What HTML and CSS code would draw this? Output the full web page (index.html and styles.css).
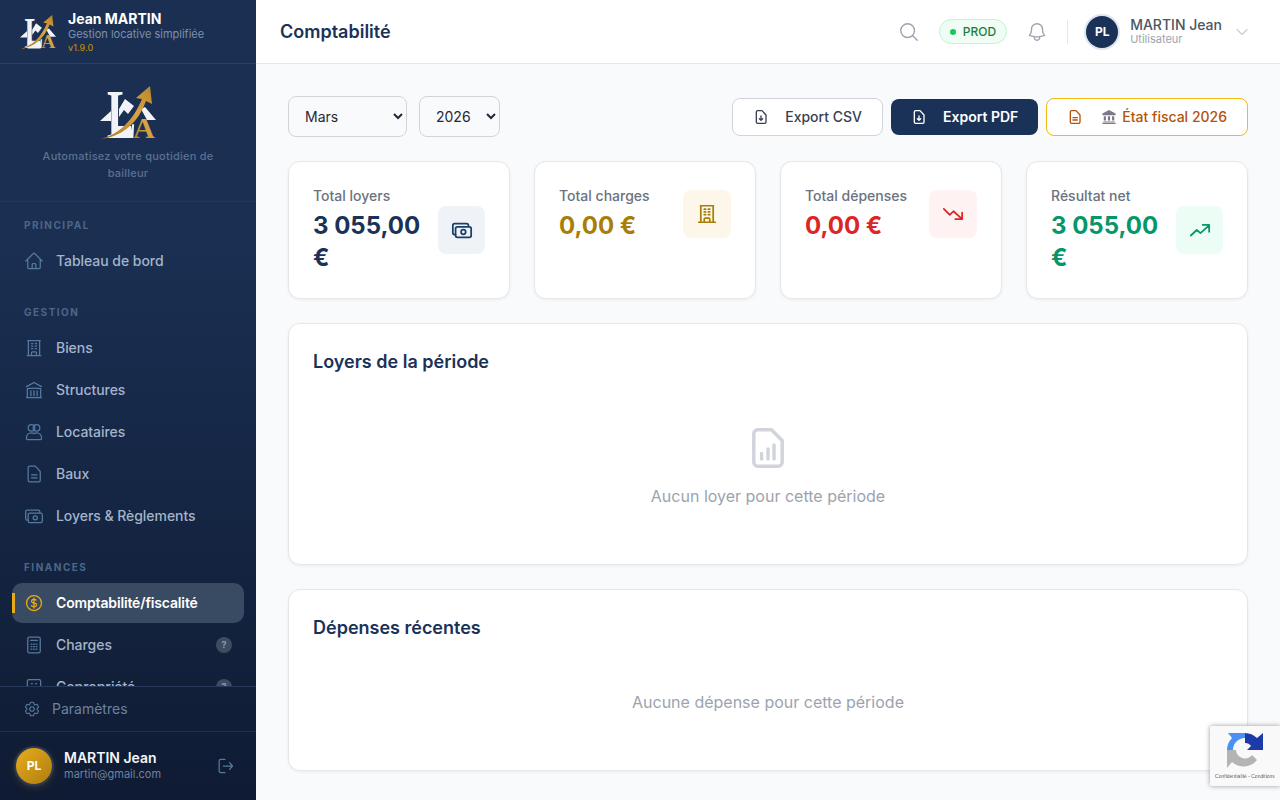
FILE: index.html
```html
<!DOCTYPE html>
<html lang="fr">
<head>
  <meta charset="UTF-8" />
  <meta name="viewport" content="width=device-width, initial-scale=1.0"/>
  <title>Comptabilité</title>
  <link rel="stylesheet" href="styles.css">
</head>
<body>
  <!-- Logo, reused in the sidebar header and the hero -->
  <svg class="defs" width="0" height="0">
    <defs>
      <linearGradient id="gold" x1="0" y1="1" x2="1" y2="0">
        <stop offset="0" stop-color="#a8731f"/>
        <stop offset="0.6" stop-color="#d7a545"/>
        <stop offset="1" stop-color="#b98428"/>
      </linearGradient>
      <symbol id="logo" viewBox="0 0 56 55">
        <text transform="translate(7 53) scale(.62 1)" class="logo-l">L</text>
        <polygon points="0,36 11,26 11,36" fill="#f1f3f6"/>
        <polygon points="19,24 25,14 34,21 28,29 24,25 19,32" fill="#f1f3f6"/>
        <polygon points="12,41 31,41 32,53 12,53" fill="#f1f3f6"/>
        <polygon points="41,24 45,22 56,35 47,35" fill="#f1f3f6"/>
        <text x="33" y="53" class="logo-a">A</text>
        <path d="M0 54 C18 50 33 36 42 14 L36 13 L50 1 L52 19 L46 16 C38 38 22 52 0 54 Z" fill="url(#gold)"/>
      </symbol>
    </defs>
  </svg>

  <aside class="sidebar">
    <div class="brand">
      <svg class="brand-logo"><use href="#logo"/></svg>
      <div>
        <div class="brand-name">Jean MARTIN</div>
        <div class="brand-sub">Gestion locative simplifiée</div>
        <div class="brand-version">v1.9.0</div>
      </div>
    </div>

    <div class="hero">
      <svg class="hero-logo"><use href="#logo"/></svg>
      <p>Automatisez votre quotidien de bailleur</p>
    </div>

    <nav class="nav">
      <div class="nav-label first">Principal</div>
      <a class="nav-item">
        <svg class="icon" viewBox="0 0 24 24"><path d="M2.25 12l8.954-8.955c.44-.439 1.152-.439 1.591 0L21.75 12M4.5 9.75v10.125c0 .621.504 1.125 1.125 1.125H9.75v-4.875c0-.621.504-1.125 1.125-1.125h2.25c.621 0 1.125.504 1.125 1.125V21h4.125c.621 0 1.125-.504 1.125-1.125V9.75M8.25 21h8.25"/></svg>
        Tableau de bord
      </a>

      <div class="nav-label">Gestion</div>
      <a class="nav-item">
        <svg class="icon" viewBox="0 0 24 24"><path d="M3.75 21h16.5M4.5 3h15M5.25 3v18m13.5-18v18M9 6.75h1.5m-1.5 3h1.5m-1.5 3h1.5m3-6H15m-1.5 3H15m-1.5 3H15M9 21v-3.375c0-.621.504-1.125 1.125-1.125h3.75c.621 0 1.125.504 1.125 1.125V21"/></svg>
        Biens
      </a>
      <a class="nav-item">
        <svg class="icon" viewBox="0 0 24 24"><path d="M12 19v-6M15.75 19v-6M8.25 19v-6M3 8l9-5 9 5M20 21V10.3A48 48 0 0 0 12 9.75c-2.6 0-5.5.2-8 .55V21M3 21h18"/></svg>
        Structures
      </a>
      <a class="nav-item">
        <svg class="icon" viewBox="0 0 24 24"><circle cx="9" cy="7" r="4"/><circle cx="15" cy="7" r="4"/><path d="M3 20v-1.5C3 15.5 5.5 13 9 13c1.300 0 2.200.3 3 1 .8-.7 1.700-1 3-1 3.500 0 6 2.500 6 5.500V20a1 1 0 0 1-1 1H4a1 1 0 0 1-1-1z"/></svg>
        Locataires
      </a>
      <a class="nav-item">
        <svg class="icon" viewBox="0 0 24 24"><path d="M7 2.500h6.500L19.500 9v10.500a2 2 0 0 1-2 2H7a2 2 0 0 1-2-2v-15a2 2 0 0 1 2-2zM9 13h6.500M9 16.500h6.500"/></svg>
        Baux
      </a>
      <a class="nav-item">
        <svg class="icon" viewBox="0 0 24 24"><path d="M5 17H4a2 2 0 0 1-2-2V7a2 2 0 0 1 2-2h13a2 2 0 0 1 2 2v1"/><rect x="5" y="8.500" width="17" height="11.500" rx="2"/><circle cx="13.500" cy="14.200" r="2.500"/></svg>
        Loyers &amp; Règlements
      </a>

      <div class="nav-label">Finances</div>
      <a class="nav-item active">
        <svg class="icon" viewBox="0 0 24 24"><path d="M12 6v12m-3-2.818l.879.659c1.171.879 3.07.879 4.242 0 1.172-.879 1.172-2.303 0-3.182C13.536 12.219 12.768 12 12 12c-.725 0-1.45-.22-2.003-.659-1.106-.879-1.106-2.303 0-3.182s2.9-.879 4.006 0l.415.33M21 12a9 9 0 11-18 0 9 9 0 0118 0z"/></svg>
        Comptabilité/fiscalité
      </a>
      <a class="nav-item">
        <svg class="icon" viewBox="0 0 24 24"><rect x="4.500" y="2.500" width="15" height="19" rx="2"/><path d="M8 6.500h8M8.500 11h1m2 0h1m2 0h1M8.500 14h1m2 0h1m2 0h1M8.500 17h1m2 0h1m2 0h1"/></svg>
        Charges
        <span class="nav-badge">?</span>
      </a>
      <a class="nav-item">
        <svg class="icon" viewBox="0 0 24 24"><rect x="4" y="3" width="16" height="18" rx="2"/><path d="M9 8h1m4 0h1M9 12h1m4 0h1"/></svg>
        Copropriété
        <span class="nav-badge">?</span>
      </a>
    </nav>

    <a class="settings">
      <svg class="icon small" viewBox="0 0 24 24"><path d="M9.594 3.94c.09-.542.56-.94 1.11-.94h2.593c.55 0 1.02.398 1.11.94l.213 1.281c.063.374.313.686.645.87.074.04.147.083.22.127.324.196.72.257 1.075.124l1.217-.456a1.125 1.125 0 011.37.49l1.296 2.247a1.125 1.125 0 01-.26 1.431l-1.003.827c-.293.24-.438.613-.431.992a6.759 6.759 0 010 .255c-.007.378.138.75.43.99l1.005.828c.424.35.534.954.26 1.43l-1.298 2.247a1.125 1.125 0 01-1.369.491l-1.217-.456c-.355-.133-.75-.072-1.076.124a6.57 6.57 0 01-.22.128c-.331.183-.581.495-.644.869l-.213 1.28c-.09.543-.56.941-1.11.941h-2.594c-.55 0-1.02-.398-1.11-.94l-.213-1.281c-.062-.374-.312-.686-.644-.87a6.52 6.52 0 01-.22-.127c-.325-.196-.72-.257-1.076-.124l-1.217.456a1.125 1.125 0 01-1.369-.49l-1.297-2.247a1.125 1.125 0 01.26-1.431l1.004-.827c.292-.24.437-.613.43-.992a6.932 6.932 0 010-.255c.007-.378-.138-.75-.43-.99l-1.004-.828a1.125 1.125 0 01-.26-1.43l1.297-2.247a1.125 1.125 0 011.37-.491l1.216.456c.356.133.751.072 1.076-.124.072-.044.146-.087.22-.128.332-.183.582-.495.644-.869l.214-1.281z"/><path d="M15 12a3 3 0 11-6 0 3 3 0 016 0z"/></svg>
      Paramètres
    </a>

    <div class="side-user">
      <div class="side-avatar">PL</div>
      <div class="side-user-text">
        <div class="side-user-name">MARTIN Jean</div>
        <div class="side-user-mail">martin@gmail.com</div>
      </div>
      <svg class="icon logout" viewBox="0 0 24 24"><path d="M12 4H7a2 2 0 0 0-2 2v12a2 2 0 0 0 2 2h5M10 12h11M17.500 8l3.500 4-3.500 4"/></svg>
    </div>
  </aside>

  <div class="main">
    <header class="topbar">
      <h1>Comptabilité</h1>
      <div class="topbar-right">
        <svg class="icon top-icon" viewBox="0 0 24 24"><path d="M21 21l-5.197-5.197m0 0A7.500 7.500 0 105.196 5.196a7.500 7.500 0 0010.607 10.607z"/></svg>
        <span class="env"><i></i>PROD</span>
        <svg class="icon top-icon" viewBox="0 0 24 24"><path d="M14.857 17.082a23.848 23.848 0 005.454-1.31A8.967 8.967 0 0118 9.750v-.7V9A6 6 0 006 9v.75a8.967 8.967 0 01-2.312 6.022c1.733.64 3.560 1.085 5.455 1.310m5.714 0a24.255 24.255 0 01-5.714 0m5.714 0a3 3 0 11-5.714 0"/></svg>
        <span class="top-divider"></span>
        <div class="top-avatar">PL</div>
        <div class="top-user">
          <div class="top-user-name">MARTIN Jean</div>
          <div class="top-user-role">Utilisateur</div>
        </div>
        <svg class="icon chevron" viewBox="0 0 24 24"><path d="M19.500 8.250l-7.500 7.500-7.500-7.500"/></svg>
      </div>
    </header>

    <main class="content">
      <div class="toolbar">
        <div class="filters">
          <select class="select month"><option>Mars</option></select>
          <select class="select year"><option>2026</option></select>
        </div>
        <div class="actions">
          <button class="btn">
            <svg class="icon doc" viewBox="0 0 24 24"><path d="M7 2.500h6.500L19.500 9v10.500a2 2 0 0 1-2 2H7a2 2 0 0 1-2-2v-15a2 2 0 0 1 2-2zM12 10.500v6.500M9.500 14.500L12 17l2.500-2.500"/></svg>
            Export CSV
          </button>
          <button class="btn primary">
            <svg class="icon doc" viewBox="0 0 24 24"><path d="M7 2.500h6.500L19.500 9v10.500a2 2 0 0 1-2 2H7a2 2 0 0 1-2-2v-15a2 2 0 0 1 2-2zM12 10.500v6.500M9.500 14.500L12 17l2.500-2.500"/></svg>
            Export PDF
          </button>
          <button class="btn fiscal">
            <svg class="icon doc" viewBox="0 0 24 24"><path d="M7 2.500h6.500L19.500 9v10.500a2 2 0 0 1-2 2H7a2 2 0 0 1-2-2v-15a2 2 0 0 1 2-2zM9 13h6.500M9 16.500h6.500"/></svg>
            <span class="fiscal-label">
              <svg class="bank" viewBox="0 0 16 16"><path d="M8 0l7.500 4V6H.500V4zM2 7h2.500v5H2zM6.750 7h2.500v5h-2.500zM11.500 7H14v5h-2.500zM1.500 13h13v1h-13zM.500 14.500h15V16H.500z"/></svg>
              État fiscal 2026
            </span>
          </button>
        </div>
      </div>

      <div class="stats">
        <div class="stat">
          <div class="stat-inner">
            <div>
              <div class="stat-label">Total loyers</div>
              <div class="stat-value navy">3 055,00 €</div>
            </div>
            <div class="stat-icon tint-navy">
              <svg class="icon" viewBox="0 0 24 24"><path d="M5 17H4a2 2 0 0 1-2-2V7a2 2 0 0 1 2-2h13a2 2 0 0 1 2 2v1"/><rect x="5" y="8.500" width="17" height="11.500" rx="2"/><circle cx="13.500" cy="14.200" r="2.500"/></svg>
            </div>
          </div>
        </div>
        <div class="stat">
          <div class="stat-inner">
            <div>
              <div class="stat-label">Total charges</div>
              <div class="stat-value gold">0,00 €</div>
            </div>
            <div class="stat-icon tint-gold">
              <svg class="icon" viewBox="0 0 24 24"><path d="M3 21h18M5 3h14M5.250 3v18m13.500-18v18M9 6.750h1.500m-1.500 3h1.500m-1.500 3h1.500m3-6H15m-1.500 3H15m-1.500 3H15M9 21v-3.400c0-.6.500-1.100 1.100-1.100h3.800c.6 0 1.100.5 1.100 1.100V21"/></svg>
            </div>
          </div>
        </div>
        <div class="stat">
          <div class="stat-inner">
            <div>
              <div class="stat-label">Total dépenses</div>
              <div class="stat-value red">0,00 €</div>
            </div>
            <div class="stat-icon tint-red">
              <svg class="icon" viewBox="0 0 24 24"><path d="M2 6.500l6.500 6.500 4-4 9.500 8.500M22 10.500v7h-7.500"/></svg>
            </div>
          </div>
        </div>
        <div class="stat">
          <div class="stat-inner">
            <div>
              <div class="stat-label">Résultat net</div>
              <div class="stat-value green">3 055,00 €</div>
            </div>
            <div class="stat-icon tint-green">
              <svg class="icon" viewBox="0 0 24 24"><path d="M2 18l6.500-6 4 3.500L22 7M15 6.500h7V14"/></svg>
            </div>
          </div>
        </div>
      </div>

      <section class="panel rents">
        <h2>Loyers de la période</h2>
        <div class="empty">
          <svg class="empty-icon" viewBox="0 0 24 24"><path d="M6.900 2.900h6.800l5.400 5.400v10.800a2 2 0 0 1-2 2H6.900a2 2 0 0 1-2-2V4.900a2 2 0 0 1 2-2z"/><path d="M8.800 17.500v-2.700M12 17.500v-5M15 17.500v-7"/></svg>
          <p>Aucun loyer pour cette période</p>
        </div>
      </section>

      <section class="panel costs">
        <h2>Dépenses récentes</h2>
        <p class="empty-line">Aucune dépense pour cette période</p>
      </section>
    </main>
  </div>

  <!-- reCAPTCHA badge, fixed over the page -->
  <div class="recaptcha">
    <svg class="recaptcha-logo" viewBox="0 0 36 36">
      <path d="M18 6A12 12 0 0 0 6 18H0A18 18 0 0 1 5 6L1 1h17z" fill="#4a90f5"/>
      <path d="M18 1v10a7 7 0 0 1 6 3l-4 4h16V1l-6 5A18 18 0 0 0 18 1z" fill="#1c3aa9"/>
      <path d="M0 18h9a9 9 0 0 0 16 5l5 5A17 17 0 0 1 5 30L0 36z" fill="#b4b4b4"/>
    </svg>
    <div class="recaptcha-text">Confidentialité - Conditions</div>
  </div>
</body>
</html>
```

FILE: styles.css
```css
* { box-sizing: border-box; }

html, body { height: 100%; }

body {
  margin: 0;
  display: flex;
  overflow: hidden;
  font-family: Inter, "Liberation Sans", sans-serif;
  background: #f9fafb;
  color: #1a3258;
}

.defs { position: absolute; }

.logo-l { font: 700 70px "Liberation Serif", serif; fill: #f1f3f6; }
.logo-a { font: 700 30px "Liberation Serif", serif; fill: url(#gold); }

.icon {
  width: 20px;
  height: 20px;
  flex: none;
  fill: none;
  stroke: currentColor;
  stroke-width: 1.5;
  stroke-linecap: round;
  stroke-linejoin: round;
}

/* Sidebar */
.sidebar {
  width: 256px;
  height: 800px;
  flex: none;
  display: flex;
  flex-direction: column;
  background: linear-gradient(180deg, #1a2f52 0%, #1a2f52 30%, #0f1b33 100%);
}

.brand {
  height: 64px;
  flex: none;
  display: flex;
  align-items: center;
  gap: 12px;
  padding: 0 20px;
  border-bottom: 1px solid #2b4163;
}

.brand-logo { width: 36px; height: 36px; flex: none; }
.brand-name { font-size: 14px; font-weight: 700; line-height: 17px; color: #fff; }
.brand-sub { font-size: 11px; line-height: 14px; color: #7d90ab; }
.brand-version { font-size: 9px; font-weight: 500; line-height: 13px; color: #b48a0d; }

.hero {
  height: 138px;
  flex: none;
  padding-top: 21px;
  text-align: center;
  border-bottom: 1px solid #22385a;
}

.hero-logo { display: block; width: 56px; height: 55px; margin: 0 auto; }

.hero p {
  margin: 8px 24px 0;
  font-size: 11px;
  font-weight: 500;
  line-height: 17px;
  letter-spacing: .23px;
  color: #5a7192;
}

.nav {
  flex: 1;
  min-height: 0;
  overflow: hidden;
  padding: 0 12px;
}

.nav-label {
  margin: 24px 12px 9px;
  font-size: 10px;
  font-weight: 700;
  line-height: 14px;
  letter-spacing: 1.5px;
  text-transform: uppercase;
  color: #4c6788;
}

.nav-label.first { margin-top: 16px; }

.nav-item {
  position: relative;
  height: 40px;
  margin-bottom: 2px;
  display: flex;
  align-items: center;
  gap: 12px;
  padding: 0 12px 1px;
  border-radius: 10px;
  font-size: 14px;
  font-weight: 500;
  letter-spacing: -.05px;
  color: #a3b4cb;
}

.nav-item .icon { color: #557a9f; }

.nav-item.active {
  background: #394a63;
  color: #fff;
  font-weight: 600;
  letter-spacing: -.15px;
}

.nav-item.active .icon { color: #e9ac17; }

.nav-item.active::before {
  content: "";
  position: absolute;
  left: 0;
  top: 10px;
  width: 3px;
  height: 20px;
  background: #e9ac17;
}

.nav-badge {
  margin-left: auto;
  width: 16px;
  height: 16px;
  border-radius: 50%;
  background: #3e4b60;
  color: #8f9bad;
  font-size: 9px;
  font-weight: 700;
  line-height: 16px;
  text-align: center;
}

.settings {
  height: 45px;
  flex: none;
  display: flex;
  align-items: center;
  gap: 11px;
  padding: 0 23px 1px;
  border-top: 1px solid #26395a;
  font-size: 14px;
  color: #6c82a0;
}

.icon.small { width: 18px; height: 18px; color: #557a9f; }

.side-user {
  height: 69px;
  flex: none;
  display: flex;
  align-items: center;
  gap: 12px;
  padding: 0 16px;
  border-top: 1px solid #1f304e;
}

.side-avatar {
  width: 36px;
  height: 36px;
  flex: none;
  border-radius: 50%;
  background: linear-gradient(135deg, #e8ac1c, #ae7d10);
  box-shadow: 0 0 0 2px #2a3a55, 0 2px 8px rgba(233, 172, 23, .25);
  color: #fff;
  font-size: 12px;
  font-weight: 700;
  line-height: 36px;
  text-align: center;
}

.side-user-text { flex: 1; min-width: 0; }
.side-user-name { font-size: 14px; font-weight: 600; line-height: 16px; color: #f3f5f8; }
.side-user-mail { font-size: 11px; line-height: 16px; color: #6c82a0; }
.logout { width: 20px; height: 20px; margin-right: 5px; color: #557a9f; }

/* Main column */
.main { flex: 1; min-width: 0; height: 800px; overflow: hidden; }

.topbar {
  height: 64px;
  display: flex;
  align-items: center;
  justify-content: space-between;
  padding: 0 30px 0 24px;
  background: #fff;
  border-bottom: 1px solid #e5e7eb;
}

.topbar h1 { margin: 0; font-size: 18px; font-weight: 600; color: #1a3258; }

.topbar-right { display: flex; align-items: center; }

.top-icon { width: 22px; height: 22px; color: #9ca3af; }

.env {
  height: 25px;
  margin: 0 19px;
  display: flex;
  align-items: center;
  gap: 7px;
  padding: 0 10px;
  border: 1px solid #bbf7d0;
  border-radius: 13px;
  background: #f0fdf4;
  font-size: 12px;
  font-weight: 500;
  color: #15803d;
}

.env i { width: 6px; height: 6px; border-radius: 50%; background: #16c85a; }

.top-divider { width: 1px; height: 24px; margin: 0 16px 0 19px; background: #e5e7eb; }

.top-avatar {
  width: 32px;
  height: 32px;
  flex: none;
  margin: 0 2px;
  border-radius: 50%;
  background: #1a3258;
  box-shadow: 0 0 0 2px #dfe5ee;
  color: #fff;
  font-size: 12px;
  font-weight: 700;
  line-height: 32px;
  text-align: center;
}

.top-user { margin: 0 0 2px 10px; }
.top-user-name { font-size: 14px; font-weight: 500; line-height: 17px; color: #4b5563; }
.top-user-role { font-size: 11px; line-height: 13px; color: #9ca3af; }
.chevron { width: 16px; height: 16px; margin-left: 12px; color: #9ca3af; }

.content { padding: 32px; }

.toolbar {
  display: flex;
  align-items: center;
  justify-content: space-between;
  margin-bottom: 24px;
}

.filters { display: flex; gap: 12px; }

.select {
  height: 41px;
  padding: 0 12px;
  border: 1px solid #d1d5db;
  border-radius: 8px;
  background: #f9fafb;
  font-family: inherit;
  font-size: 14px;
  color: #1f2937;
}

.select.month { width: 119px; }
.select.year { width: 81px; }

.actions { display: flex; align-items: center; gap: 8px; }

.btn {
  height: 38px;
  display: flex;
  align-items: center;
  gap: 16px;
  padding: 0 20px;
  border: 1px solid #d1d5db;
  border-radius: 8px;
  background: #fff;
  font-family: inherit;
  font-size: 14px;
  font-weight: 500;
  color: #374151;
}

.btn .doc { width: 16px; height: 16px; stroke-width: 2; }

.btn.primary {
  height: 36px;
  border: none;
  background: #1a3258;
  color: #fff;
  font-weight: 600;
}

.btn.fiscal { gap: 19px; border-color: #f5b90f; color: #b45309; }
.fiscal-label { display: flex; align-items: center; gap: 6px; }
.bank { width: 14px; height: 14px; fill: #7d7789; }

.stats {
  display: grid;
  grid-template-columns: repeat(4, 1fr);
  gap: 24px;
  margin-bottom: 24px;
}

.stat {
  height: 138px;
  padding: 24px;
  background: #fff;
  border: 1px solid #e5e7eb;
  border-radius: 12px;
  box-shadow: 0 1px 3px rgba(0, 0, 0, .06);
}

.stat-inner { display: flex; align-items: center; justify-content: space-between; }
.stat-label { font-size: 14px; font-weight: 500; line-height: 20px; color: #6b7280; }
.stat-value { margin-top: 4px; font-size: 24px; font-weight: 700; line-height: 32px; }

.navy { color: #1a3258; }
.gold { color: #a87e06; }
.red { color: #dc2626; }
.green { color: #059669; }

.stat-icon {
  width: 48px;
  height: 48px;
  display: flex;
  align-items: center;
  justify-content: center;
  border-radius: 8px;
}

.stat-icon .icon { width: 22px; height: 22px; stroke-width: 1.9; }

.tint-navy { background: #eff3f8; color: #1a3f66; }
.tint-gold { background: #fdf7ea; color: #a87e06; }
.tint-red { background: #fef2f2; color: #dc2626; }
.tint-green { background: #ecfdf5; color: #059669; }

.panel {
  margin-bottom: 24px;
  padding: 24px;
  background: #fff;
  border: 1px solid #e5e7eb;
  border-radius: 12px;
  box-shadow: 0 1px 3px rgba(0, 0, 0, .06);
}

.panel h2 { margin: 0; font-size: 18px; font-weight: 600; line-height: 28px; color: #1a3258; }
.panel.rents { height: 242px; }
.panel.costs { height: 182px; }

.empty { margin-top: 48px; text-align: center; }

.empty-icon {
  display: block;
  width: 48px;
  height: 48px;
  margin: 0 auto;
  fill: none;
  stroke: #d1d5db;
  stroke-width: 1.75;
  stroke-linecap: round;
  stroke-linejoin: round;
}

.empty p, .empty-line {
  margin: 12px 0 0;
  font-size: 16px;
  line-height: 24px;
  text-align: center;
  color: #9ca3af;
}

.empty-line { margin-top: 48px; }

.recaptcha {
  position: fixed;
  right: 0;
  bottom: 14px;
  width: 70px;
  height: 60px;
  padding-top: 6px;
  background: #f9f9f9;
  border-radius: 2px 0 0 2px;
  box-shadow: 0 0 5px rgba(0, 0, 0, .4);
  text-align: center;
}

.recaptcha-logo { display: block; width: 36px; height: 36px; margin: 0 auto 5px 17px; }
.recaptcha-text { font-family: "Liberation Sans", sans-serif; font-size: 5px; color: #666; white-space: nowrap; }
```
